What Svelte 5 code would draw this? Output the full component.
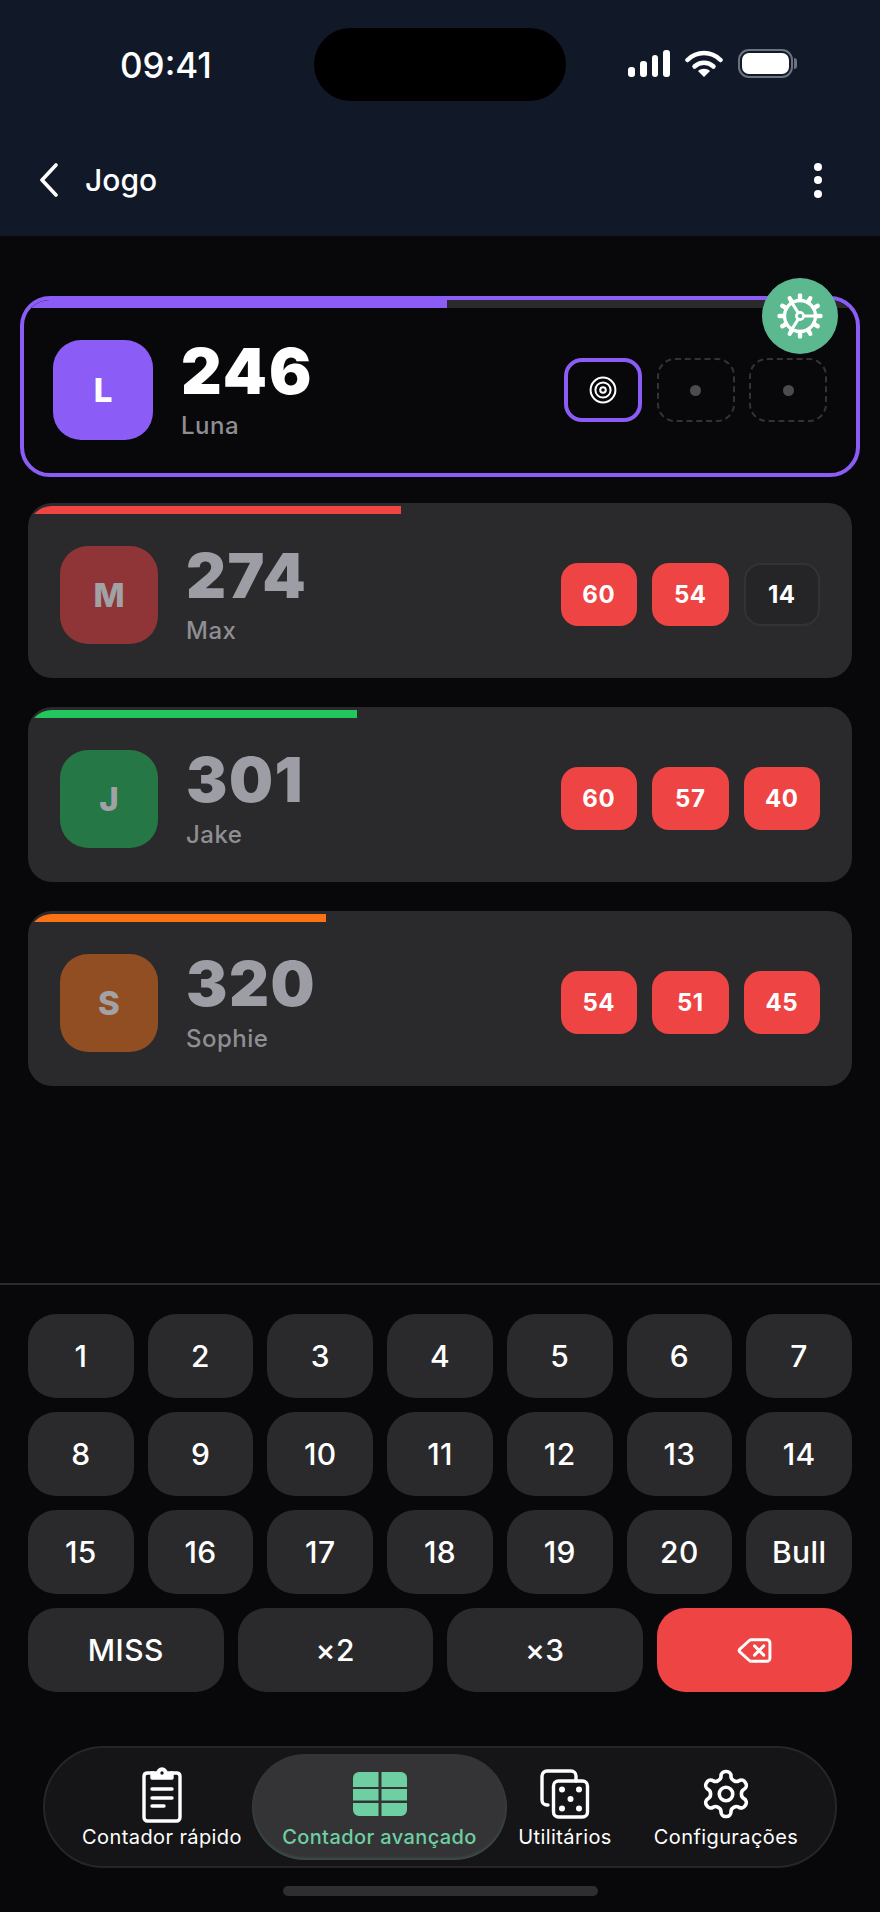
<script>
  // Dart scoreboard: header, player cards with last three throws, keypad, tabs.
  const players = [
    { letter: 'L', score: 246, name: 'Luna', bar: '#8b5cf6', avatar: '#8b5cf6', active: true, throws: [] },
    { letter: 'M', score: 274, name: 'Max', bar: '#ef4444', avatar: '#8f3538', throws: [{ v: 60, hot: true }, { v: 54, hot: true }, { v: 14 }] },
    { letter: 'J', score: 301, name: 'Jake', bar: '#22c55e', avatar: '#267746', throws: [{ v: 60, hot: true }, { v: 57, hot: true }, { v: 40, hot: true }] },
    { letter: 'S', score: 320, name: 'Sophie', bar: '#f97316', avatar: '#914e22', throws: [{ v: 54, hot: true }, { v: 51, hot: true }, { v: 45, hot: true }] },
  ];
  const keys = [1, 2, 3, 4, 5, 6, 7, 8, 9, 10, 11, 12, 13, 14, 15, 16, 17, 18, 19, 20, 'Bull'];
  const progress = (score) => ((501 - score) / 501) * 100;
  const teeth = Array.from({ length: 12 }, (_, i) => i * 30);
</script>

<div class="phone">
  <header class="top">
    <div class="island"></div>
    <div class="status">
      <span class="time">09:41</span>
      <div class="status-icons">
        <div class="signal"><i class="s1"></i><i class="s2"></i><i class="s3"></i><i class="s4"></i></div>
        <svg class="wifi" width="38" height="27" viewBox="0 0 38 27" fill="none" stroke="#fff" stroke-linecap="round">
          <path d="M2.5 10C12 .8 26 .8 35.5 10" stroke-width="4.5" />
          <path d="M9.5 16.5C15 11.5 23 11.5 28.5 16.5" stroke-width="4.5" />
          <path d="M19 27l-6-6c3.4-3 8.6-3 12 0z" fill="#fff" stroke="none" />
        </svg>
        <div class="battery"><div class="battery-fill"></div></div>
      </div>
    </div>
    <div class="nav">
      <svg width="20" height="34" viewBox="0 0 20 34" fill="none" stroke="#fff" stroke-width="3.6" stroke-linecap="round" stroke-linejoin="round">
        <path d="M17 2 3 17l14 15" />
      </svg>
      <span class="title">Jogo</span>
      <div class="dots"><i></i><i></i><i></i></div>
    </div>
  </header>

  <main class="cards">
    {#each players as p}
      <section class="card" class:active={p.active}>
        <div class="track">
          <div class="rail"><div class="bar" style="width: {progress(p.score)}%; background: {p.bar};"></div></div>
        </div>
        <div class="row">
          <div class="avatar" style="background: {p.avatar};">{p.letter}</div>
          <div class="info">
            <div class="score">{p.score}</div>
            <div class="name">{p.name}</div>
          </div>
          <div class="throws">
            {#if p.active}
              <div class="slot current">
                <svg width="30" height="30" viewBox="0 0 30 30" fill="none" stroke="#fff" stroke-width="2">
                  <circle cx="15" cy="15" r="12.4" /><circle cx="15" cy="15" r="7.6" /><circle cx="15" cy="15" r="2.8" />
                </svg>
              </div>
              <div class="slot empty"><i></i></div>
              <div class="slot empty"><i></i></div>
            {:else}
              {#each p.throws as t}
                <div class="chip" class:hot={t.hot}>{t.v}</div>
              {/each}
            {/if}
          </div>
        </div>
        {#if p.active}
          <div class="badge">
            <svg width="48" height="48" viewBox="0 0 48 48" fill="none" stroke="#fff" stroke-linecap="round">
              <circle cx="24" cy="24" r="15.5" stroke-width="3.4" />
              {#each teeth as a}
                <path d="M24 8V3.5" stroke-width="4.4" transform="rotate({a} 24 24)" />
              {/each}
              <path d="M27.4 24H39M22.3 21 14.5 8.5M22.3 27 14.5 39.5" stroke-width="3.2" />
              <circle cx="24" cy="24" r="3.6" stroke-width="2.6" />
            </svg>
          </div>
        {/if}
      </section>
    {/each}
  </main>

  <section class="pad">
    <div class="keys">
      {#each keys as k}
        <button type="button" class="key">{k}</button>
      {/each}
    </div>
    <div class="actions">
      <button type="button" class="key">MISS</button>
      <button type="button" class="key">×2</button>
      <button type="button" class="key">×3</button>
      <button type="button" class="key danger" aria-label="Apagar">
        <svg width="37" height="37" viewBox="0 0 24 24" fill="none" stroke="#fff" stroke-width="1.9" stroke-linecap="round" stroke-linejoin="round">
          <path d="M10 5a2 2 0 0 0-1.344.519l-6.328 5.74a1 1 0 0 0 0 1.481l6.328 5.741A2 2 0 0 0 10 19h10a2 2 0 0 0 2-2V7a2 2 0 0 0-2-2z" />
          <path d="m12 9 6 6M18 9l-6 6" />
        </svg>
      </button>
    </div>
  </section>

  <nav class="tabs">
    <div class="tab">
      <svg width="42" height="58" viewBox="0 0 42 58" fill="none" stroke="#fff" stroke-width="3.4" stroke-linecap="round" stroke-linejoin="round">
        <path d="M12 8H6a3.5 3.5 0 0 0-3 3.5v41A3.5 3.5 0 0 0 6.5 56h29a3.5 3.5 0 0 0 3.5-3.5v-41A3.5 3.5 0 0 0 36 8h-6" />
        <path d="M11 13V8h6a4 4 0 0 1 8 0h6v5z" fill="#fff" />
        <circle cx="21" cy="8" r="1.7" fill="#151517" stroke="none" />
        <path d="M11 24h20M11 33h20M11 41h12" />
      </svg>
      <span>Contador rápido</span>
    </div>
    <div class="tab on">
      <svg width="54" height="44" viewBox="0 0 54 44" fill="#6ecfa2">
        <path d="M6 0h19.5v15H0V6a6 6 0 0 1 6-6zM28.5 0H48a6 6 0 0 1 6 6v9H28.5zM0 17h25.5v11.5H0zM28.5 17H54v11.5H28.5zM0 31h25.5v13H6a6 6 0 0 1-6-6zM28.5 31H54v7a6 6 0 0 1-6 6H28.5z" />
      </svg>
      <span>Contador avançado</span>
    </div>
    <div class="tab">
      <svg width="50" height="50" viewBox="0 0 50 50" fill="none" stroke="#fff" stroke-width="3.4" stroke-linecap="round" stroke-linejoin="round">
        <rect x="13.5" y="12" width="34" height="36" rx="5" />
        <path d="M8 36H7a5 5 0 0 1-5-5V7a5 5 0 0 1 5-5h24a5 5 0 0 1 5 5v5" />
        <g fill="#fff" stroke="none">
          <circle cx="22" cy="20.5" r="3" /><circle cx="39" cy="20.5" r="3" /><circle cx="30.5" cy="30" r="3" /><circle cx="22" cy="39.5" r="3" /><circle cx="39" cy="39.5" r="3" />
        </g>
      </svg>
      <span>Utilitários</span>
    </div>
    <div class="tab">
      <svg width="54" height="54" viewBox="0 0 24 24" fill="none" stroke="#fff" stroke-width="1.6" stroke-linecap="round" stroke-linejoin="round">
        <path d="M12.22 2h-.44a2 2 0 0 0-2 2v.18a2 2 0 0 1-1 1.73l-.43.25a2 2 0 0 1-2 0l-.15-.08a2 2 0 0 0-2.73.73l-.22.38a2 2 0 0 0 .73 2.73l.15.1a2 2 0 0 1 1 1.72v.51a2 2 0 0 1-1 1.74l-.15.09a2 2 0 0 0-.73 2.73l.22.38a2 2 0 0 0 2.73.73l.15-.08a2 2 0 0 1 2 0l.43.25a2 2 0 0 1 1 1.73V20a2 2 0 0 0 2 2h.44a2 2 0 0 0 2-2v-.18a2 2 0 0 1 1-1.73l.43-.25a2 2 0 0 1 2 0l.15.08a2 2 0 0 0 2.73-.73l.22-.39a2 2 0 0 0-.73-2.73l-.15-.08a2 2 0 0 1-1-1.74v-.5a2 2 0 0 1 1-1.74l.15-.09a2 2 0 0 0 .73-2.73l-.22-.38a2 2 0 0 0-2.73-.73l-.15.08a2 2 0 0 1-2 0l-.43-.25a2 2 0 0 1-1-1.73V4a2 2 0 0 0-2-2z" />
        <circle cx="12" cy="12" r="3" />
      </svg>
      <span>Configurações</span>
    </div>
  </nav>
  <div class="home"></div>
</div>

<style>
  :global(body) {
    margin: 0;
    background: #08080b;
  }
  .phone {
    position: relative;
    width: 880px;
    height: 1912px;
    display: flex;
    flex-direction: column;
    overflow: hidden;
    background: #08080b;
    color: #fff;
    font-family: Inter, "Liberation Sans", sans-serif;
  }

  .top {
    flex: 0 0 236px;
    background: #111827;
  }
  .island {
    position: absolute;
    left: 314px;
    top: 28px;
    width: 252px;
    height: 73px;
    border-radius: 37px;
    background: #000;
  }
  .status {
    height: 140px;
    box-sizing: border-box;
    padding: 49px 81px 0 120px;
    display: flex;
    justify-content: space-between;
    align-items: flex-start;
  }
  .time {
    font-size: 35px;
    line-height: 32px;
    font-weight: 500;
  }
  .status-icons {
    display: flex;
    align-items: center;
    gap: 15px;
  }
  .signal {
    display: flex;
    align-items: flex-end;
    gap: 5px;
    height: 27px;
  }
  .signal i {
    width: 6.75px;
    border-radius: 3px;
    background: #fff;
  }
  .s1 { height: 10px; }
  .s2 { height: 16px; }
  .s3 { height: 22px; }
  .s4 { height: 27px; }
  .battery {
    position: relative;
    width: 55px;
    height: 29px;
    box-sizing: border-box;
    border: 2px solid #6b7280;
    border-radius: 11px;
    padding: 2px;
    margin-right: 6px;
  }
  .battery::after {
    content: '';
    position: absolute;
    right: -6px;
    top: 7px;
    width: 3px;
    height: 11px;
    border-radius: 0 3px 3px 0;
    background: #6b7280;
  }
  .battery-fill {
    width: 100%;
    height: 100%;
    border-radius: 7px;
    background: #fff;
  }
  .nav {
    display: flex;
    align-items: center;
    height: 80px;
    padding: 0 58px 0 39px;
  }
  .title {
    margin-left: 26px;
    font-size: 30px;
    font-weight: 500;
  }
  .dots {
    margin-left: auto;
    display: flex;
    flex-direction: column;
    gap: 5.5px;
  }
  .dots i {
    width: 8px;
    height: 8px;
    border-radius: 50%;
    background: #fff;
  }

  .cards {
    flex: 1;
    display: flex;
    flex-direction: column;
    gap: 29px;
    padding: 60px 28px 0;
  }
  .card {
    position: relative;
    height: 175px;
    box-sizing: border-box;
    padding-top: 11px;
    display: flex;
    flex-direction: column;
    border-radius: 24px;
    background: #2a2a2c;
  }
  .card.active {
    height: 181px;
    padding-top: 8px;
    margin: 0 -8px -3px;
    border: 4px solid #8b5cf6;
    border-radius: 30px;
    background: #08080b;
  }
  /* clips the progress rail to the card's rounded corners */
  .track {
    position: absolute;
    inset: 3px 0 0;
    border-radius: 24px;
    overflow: hidden;
  }
  .active .track {
    inset: 0;
    border-radius: 26px;
  }
  .rail {
    height: 8px;
    background: #2a2a2c;
  }
  .bar {
    height: 100%;
  }
  .row {
    position: relative;
    flex: 1;
    display: flex;
    align-items: center;
    padding: 0 32px 3px;
  }
  .active .row {
    padding: 0 29px 1px;
  }
  .avatar {
    flex: none;
    width: 98px;
    height: 98px;
    display: flex;
    align-items: center;
    justify-content: center;
    border-radius: 28px;
    color: #a2a2a6;
    font-size: 33px;
    font-weight: 800;
  }
  .active .avatar {
    width: 100px;
    height: 100px;
    color: #fff;
  }
  .info {
    margin-left: 28px;
    display: flex;
    flex-direction: column;
    gap: 8px;
  }
  .active .info {
    margin-left: 28px;
  }
  .score {
    font-size: 62px;
    line-height: 64px;
    font-weight: 900;
    letter-spacing: 1.5px;
    color: #9d9da5;
  }
  .active .score {
    font-size: 63px;
    letter-spacing: 2px;
    color: #fff;
  }
  .name {
    font-size: 24px;
    line-height: 30px;
    font-weight: 500;
    letter-spacing: 0.5px;
    color: #8e8e93;
  }
  .throws {
    margin-left: auto;
    display: flex;
    gap: 15px;
  }
  .active .throws {
    gap: 14.5px;
  }
  .chip {
    width: 76.5px;
    height: 63px;
    box-sizing: border-box;
    display: flex;
    align-items: center;
    justify-content: center;
    border: 2px solid #333337;
    border-radius: 17px;
    background: #252527;
    font-size: 24px;
    font-weight: 700;
    letter-spacing: 0.5px;
  }
  .chip.hot {
    border: none;
    background: #ef4444;
  }
  .slot {
    width: 78px;
    height: 64px;
    box-sizing: border-box;
    display: flex;
    align-items: center;
    justify-content: center;
    border-radius: 18px;
  }
  .slot.current {
    border: 4px solid #8b5cf6;
  }
  .slot.empty {
    border: 2px dashed #333337;
  }
  .slot.empty i {
    width: 11px;
    height: 11px;
    border-radius: 50%;
    background: #4c4c50;
  }
  .badge {
    position: absolute;
    right: 18px;
    top: -22px;
    width: 76px;
    height: 76px;
    display: flex;
    align-items: center;
    justify-content: center;
    border-radius: 50%;
    background: #5cb88e;
  }

  .pad {
    border-top: 2px solid #2a2a2c;
    padding: 29px 28px 0;
    display: flex;
    flex-direction: column;
    gap: 14px;
  }
  .keys {
    display: grid;
    grid-template-columns: repeat(7, 1fr);
    grid-auto-rows: 84px;
    gap: 14px;
  }
  .actions {
    display: grid;
    grid-template-columns: repeat(4, 1fr);
    grid-auto-rows: 84px;
    gap: 14px;
  }
  .key {
    display: flex;
    align-items: center;
    justify-content: center;
    padding: 0;
    border: none;
    border-radius: 28px;
    background: #2a2a2c;
    color: #fff;
    font: 500 30px Inter, "Liberation Sans", sans-serif;
    letter-spacing: 0.4px;
  }
  .key.danger {
    background: #ef4444;
  }

  .tabs {
    margin: 54px 43px 0;
    height: 122px;
    box-sizing: border-box;
    display: grid;
    grid-template-columns: 180px 255px 116px 206px;
    padding: 6px 0 6px 27px;
    border: 2px solid #262628;
    border-radius: 61px;
    background: #151517;
  }
  .tab {
    display: flex;
    flex-direction: column;
    align-items: center;
    font-size: 20px;
    font-weight: 400;
    letter-spacing: 0.4px;
    white-space: nowrap;
  }
  .tab svg {
    display: block;
    height: 60px;
    margin-top: 10px;
  }
  .tab span {
    line-height: 24px;
    margin-top: 1px;
  }
  .tab.on {
    border-radius: 54px;
    background: #343436;
    box-shadow: inset 0 -2px 3px rgba(110, 207, 162, 0.18);
    color: #6ecfa2;
    font-weight: 500;
  }
  .home {
    align-self: center;
    width: 315px;
    height: 10px;
    margin: 18px 0 16px;
    border-radius: 5px;
    background: #2e2e30;
  }
</style>
